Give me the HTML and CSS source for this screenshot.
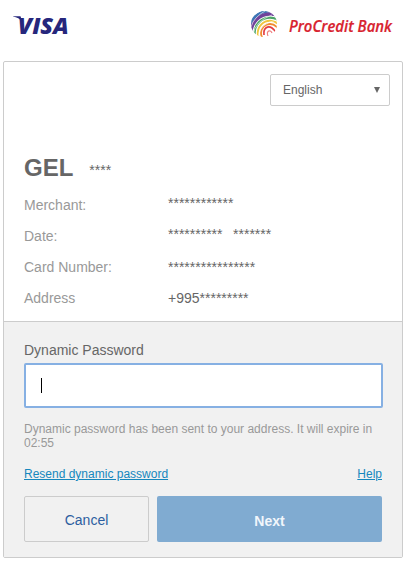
FILE: index.html
```html
<!DOCTYPE html>
<html lang="en">
<head>
<meta charset="utf-8">
<title>Payment verification</title>
<link rel="stylesheet" href="styles.css">
</head>
<body>
<header class="header">
  <svg class="visa" width="70" height="40" viewBox="0 0 70 40">
    <path d="M0 6.2h7.5l2 6C7 9 4 7.2 0 6.6z" fill="#26277c"/>
    <text x="4.8" y="24" textLength="51" lengthAdjust="spacingAndGlyphs">VISA</text>
  </svg>
  <div class="bank">
    <svg width="28" height="28" viewBox="0 0 28 28" fill="none">
      <defs><clipPath id="globe"><circle cx="14" cy="14" r="13"/></clipPath></defs>
      <g clip-path="url(#globe)">
        <circle cx="20" cy="23" r="22" stroke="#3e76b5" stroke-width="3"/>
        <circle cx="20" cy="23" r="19" stroke="#70429a" stroke-width="3.4"/>
        <circle cx="20" cy="23" r="15.4" stroke="#4ba466" stroke-width="2.2"/>
        <circle cx="20" cy="23" r="12.2" stroke="#f0c63e" stroke-width="2"/>
        <circle cx="20" cy="23" r="9" stroke="#f08b2f" stroke-width="1.8"/>
        <path d="M14 25C13 18 18 15 22 18S26 23 26 26" stroke="#e33c42" stroke-width="1.7"/>
        <path d="M18 26C16 21 20 19 22 23" stroke="#ef8180" stroke-width="1.2"/>
        <path d="M3 25Q5 11 22 5M8 27Q9 14 26 10M1 17Q4 7 15 1" stroke="#fff" stroke-width=".6"/>
      </g>
    </svg>
    <svg class="bank-name" width="112" height="40" viewBox="0 0 112 40">
      <text x="1" y="22" textLength="103" lengthAdjust="spacingAndGlyphs">ProCredit Bank</text>
    </svg>
  </div>
</header>
<main class="card">
  <section class="details">
    <div class="language"><span>English</span><i class="arrow"></i></div>
    <div class="amount"><strong>GEL</strong><span>****</span></div>
    <dl class="rows">
      <dt>Merchant:</dt><dd class="raised">************</dd>
      <dt>Date:</dt><dd class="raised">**********&nbsp;&nbsp;&thinsp;*******</dd>
      <dt>Card Number:</dt><dd>****************</dd>
      <dt>Address</dt><dd>+995*********</dd>
    </dl>
  </section>
  <section class="verify">
    <div class="label">Dynamic Password</div>
    <div class="field"><i class="caret"></i></div>
    <p class="hint">Dynamic password has been sent to your address. It will expire in 02:55</p>
    <div class="links"><a href="#">Resend dynamic password</a><a href="#">Help</a></div>
    <div class="actions"><button class="cancel">Cancel</button><button class="next">Next</button></div>
  </section>
</main>
</body>
</html>
```
FILE: styles.css
```css
* { box-sizing: border-box; }
body { margin: 0; height: 561px; background: #fff; color: #666; font: 14px/16px "Liberation Sans", Arial, sans-serif; overflow: hidden; }
.header { height: 61px; padding: 10px 7px 0 13px; display: flex; justify-content: space-between; align-items: flex-start; }
.visa text { font: italic 800 22.5px "Open Sans", sans-serif; fill: #26277c; }
.bank { display: flex; gap: 10px; }
.bank-name text { font: italic 600 15.5px "Open Sans", sans-serif; fill: #d8232f; stroke: #d8232f; stroke-width: .2px; }
.card { width: 400px; height: 497px; margin-left: 3px; border: 1px solid #ccc; border-radius: 2px; }
.details { height: 259px; padding: 12px 12px 0 20px; }
.language { width: 120px; height: 32px; margin-left: auto; padding: 0 9px 0 12px; border: 1px solid #ccc; border-radius: 2px; display: flex; align-items: center; justify-content: space-between; font-size: 12px; }
.arrow { border: solid transparent; border-width: 6px 3.5px 0; border-top-color: #666; }
.amount { margin-top: 48px; height: 28px; display: flex; align-items: baseline; gap: 16px; line-height: 28px; }
.amount strong { font-size: 24px; }
.amount span { transform: translateY(-1px); }
.rows { margin: 8px 0 0; display: grid; grid-template-columns: 144px 1fr; grid-auto-rows: 31px; line-height: 31px; }
.rows dt { color: #999; }
.rows dd { margin: 0; }
.rows .raised { margin-top: -2px; }
.verify { height: 236px; padding: 20px 20px 0; border-top: 1px solid #ccc; background: #f1f1f1; }
.field { width: 359px; height: 45px; margin-top: 5px; padding: 13px 0 0 15px; border: 2px solid #86b0e3; border-radius: 2px; background: #fff; }
.caret { display: block; width: 1px; height: 15px; background: #000; }
.hint { margin: 14px 0 0; color: #999; font-size: 12px; line-height: 14px; }
.links { display: flex; justify-content: space-between; margin-top: 17px; font-size: 12px; line-height: 14px; }
.links a { color: #1687bd; }
.actions { display: flex; gap: 8px; margin-top: 15px; }
.actions button { height: 46px; padding: 0; border-radius: 2px; font: 14px "Liberation Sans", Arial, sans-serif; }
.actions .cancel { width: 125px; padding-top: 2px; border: 1px solid #ccc; background: #f1f1f1; color: #2d5ea0; }
.actions .next { width: 225px; padding-top: 3px; border: 0; background: #80abd1; color: #f1f6fb; font-weight: 700; }
```
